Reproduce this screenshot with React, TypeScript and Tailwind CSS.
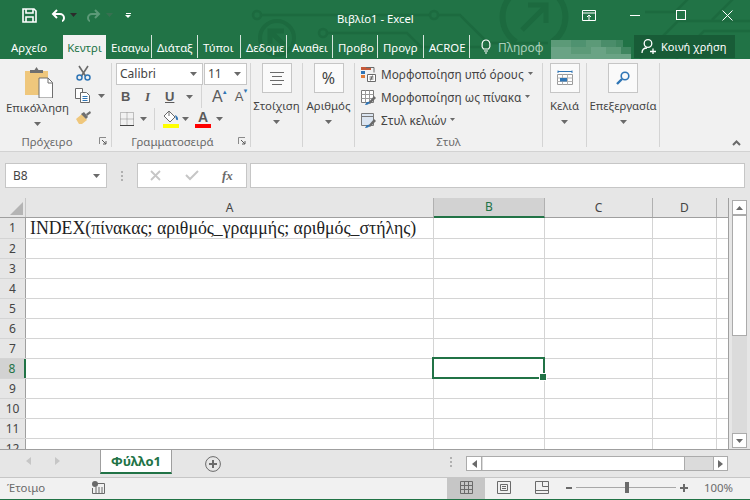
import React from 'react';

const UI_FONT = "font-['Noto_Sans','Liberation_Sans',sans-serif]";

const TABS = [
  { label: 'Εισαγω', w: 'w-[46px]' },
  { label: 'Διάταξ', w: 'w-[46px]' },
  { label: 'Τύποι', w: 'w-[43px]' },
  { label: 'Δεδομε', w: 'w-[46px]' },
  { label: 'Αναθει', w: 'w-[46px]' },
  { label: 'Προβο', w: 'w-[45px]' },
  { label: 'Προγρ', w: 'w-[46px]' },
  { label: 'ACROE', w: 'w-[46px]' },
];

const COLS = [
  { name: 'A', w: 'w-[408px]' },
  { name: 'B', w: 'w-[111px]' },
  { name: 'C', w: 'w-[108px]' },
  { name: 'D', w: 'w-[64px]' },
  { name: '', w: 'w-[12px]' },
];

const ROWS = [1, 2, 3, 4, 5, 6, 7, 8, 9, 10, 11, 12];

const Caret = ({ className = '' }: { className?: string }) => (
  <svg width="7" height="4" viewBox="0 0 7 4" className={className}>
    <path d="M0 0h7L3.5 4z" fill="#6a6a6a" />
  </svg>
);

const Launcher = () => (
  <svg width="8" height="8" viewBox="0 0 8 8">
    <path d="M.5 7V.5H7" fill="none" stroke="#8a8a8a" />
    <path d="M3 3l4 4M7 4v3H4" fill="none" stroke="#5a5a5a" />
  </svg>
);

const CircuitBg = () => (
  <svg width="750" height="59" viewBox="0 0 750 59" className="absolute left-0 top-0" fill="none" stroke="#1c6a3f" strokeWidth="2.5">
    <circle cx="257" cy="15" r="4" />
    <path d="M261 15h170M438 15h22l28 28h60" />
    <circle cx="434" cy="15" r="4" />
    <circle cx="323" cy="33" r="4" />
    <path d="M327 33h80l14 14h70" />
    <circle cx="277" cy="38" r="17" strokeWidth="4" />
    <path d="M270 44V31h14M271 32l13 13" strokeWidth="5" />
    <path d="M516-8a30 30 0 0 0 0 50M552-8a30 30 0 0 1 0 50" strokeWidth="6" />
    <path d="M522 30l24-24M528 5h18v18" strokeWidth="5" />
    <path d="M640 59l38-38h72M676 59l28-28h46M645 12h30l14-14M712 20l22-22" />
  </svg>
);

const SaveIcon = () => (
  <svg width="15" height="15" viewBox="0 0 15 15" fill="none" stroke="#fff" strokeWidth="1.6">
    <path d="M1 1h11l2 2v11H1z" />
    <path d="M4 1v4h7V1M4 14V9h7v5" />
  </svg>
);

const UndoIcon = ({ dim }: { dim?: boolean }) => (
  <svg width="15" height="13" viewBox="0 0 15 13" fill="none" stroke={dim ? '#5c9a78' : '#fff'} strokeWidth="2" className={dim ? '-scale-x-100' : ''}>
    <path d="M6 1L2 5l4 4M2 5h7a4 4 0 0 1 4 4c0 1.500-1 3-2 3" />
  </svg>
);

const PasteIcon = () => (
  <svg width="29" height="31" viewBox="0 0 29 31">
    <path d="M1 4h23v24H1z" fill="#efc77c" />
    <path d="M6 6V3h4.500l2-3 2 3H19v3z" fill="#6f6f6f" />
    <path d="M15 11h9l4.500 4.500V31H15z" fill="#fff" stroke="#6f6f6f" />
    <path d="M24 11v5h4.500" fill="none" stroke="#6f6f6f" />
  </svg>
);

const ScissorsIcon = () => (
  <svg width="15" height="16" viewBox="0 0 15 16" fill="none">
    <path d="M3 1l6.500 10M12 1L5.500 11" stroke="#6a6a6a" strokeWidth="1.600" />
    <circle cx="3.500" cy="12.500" r="2.500" stroke="#2f75b5" strokeWidth="1.500" />
    <circle cx="11.500" cy="12.500" r="2.500" stroke="#2f75b5" strokeWidth="1.500" />
  </svg>
);

const CopyIcon = () => (
  <svg width="15" height="15" viewBox="0 0 15 15" fill="#fff" stroke="#6a6a6a">
    <path d="M.5.500h7v10h-7z" />
    <path d="M5.500 4.500h6l3 3v7h-9z" />
    <path d="M7.500 8.500h5M7.500 10.500h5M7.500 12.500h5" stroke="#2f75b5" />
  </svg>
);

const BrushIcon = () => (
  <svg width="17" height="15" viewBox="0 0 17 15">
    <path d="M1 9l6-5 5 6-5 4H4z" fill="#efc77c" />
    <path d="M6 4l3-2 4 5-2 2z" fill="#6f6f6f" />
    <path d="M11 4l4-3 1 2-4 3z" fill="#6f6f6f" />
  </svg>
);

const BordersIcon = () => (
  <svg width="14" height="14" viewBox="0 0 14 14" fill="none" stroke="#8a8a8a" strokeDasharray="1 1">
    <path d="M.5.500h13v13h-13zM7 .500v13M.5 7h13" />
    <path d="M0 13.500h14" stroke="#444" strokeDasharray="none" />
  </svg>
);

const FillIcon = () => (
  <svg width="17" height="18" viewBox="0 0 17 18">
    <path d="M7 1l6 6-5 5-6-6z" fill="#fff" stroke="#6a6a6a" />
    <path d="M7 1v5" stroke="#6a6a6a" />
    <path d="M13 5c2 1 3 2 3 4s-2 1-2 0z" fill="#2f75b5" />
    <path d="M1 14h16v4H1z" fill="#ffff00" />
  </svg>
);

const AlignIcon = () => (
  <svg width="16" height="13" viewBox="0 0 16 13" stroke="#6a6a6a">
    <path d="M1 .500h14M3 4.500h10M1 8.500h14M3 12.500h10" />
  </svg>
);

const CondIcon = () => (
  <svg width="15" height="15" viewBox="0 0 15 15">
    <path d="M0 0h10v3H0z" fill="#c55a3b" />
    <path d="M0 4h4v3H0z" fill="#2f75b5" />
    <path d="M0 8h4v3H0z" fill="#e07b39" />
    <path d="M5 .500h8v5" fill="none" stroke="#6a6a6a" />
    <path d="M6.500 7.500h8v7h-8z" fill="#fff" stroke="#6a6a6a" />
    <path d="M8.500 10h4M8.500 12h4M11.500 8.500l-2 5" stroke="#444" strokeWidth=".8" />
  </svg>
);

const TableIcon = ({ plain }: { plain?: boolean }) => (
  <svg width="16" height="16" viewBox="0 0 16 16">
    <path d="M.5.500h12v12H.5z" fill={plain ? '#dbe5f1' : '#fff'} stroke="#7a7a7a" />
    {!plain && <path d="M4.500.500v12M8.500.500v12M.5 4.500h12M.5 8.500h12" stroke="#9a9a9a" />}
    {plain && <path d="M.5 3.500h12" stroke="#7a7a7a" />}
    <path d="M7 13l6-7 2 2-6 6z" fill="#6a6a6a" />
    <path d="M4 15c1-3 3-4 5-3-1 2-2 3-5 3z" fill="#2f75b5" />
  </svg>
);

const CellsIcon = () => (
  <svg width="16" height="17" viewBox="0 0 16 17" fill="none">
    <path d="M1 .500V3M15 .500V3M1 1.500h14" stroke="#2f75b5" />
    <path d="M.5 4.500h15v10h-15z" stroke="#9a9a9a" fill="#fff" />
    <path d="M5.500 4.500v10M10.500 4.500v10M.5 8h15M.5 11.500h15" stroke="#b4b4b4" />
    <path d="M3 8h7v3.500H3z" fill="#2f75b5" />
  </svg>
);

const SearchIcon = () => (
  <svg width="14" height="14" viewBox="0 0 14 14" fill="none">
    <circle cx="9" cy="5" r="3.800" stroke="#2f75b5" strokeWidth="1.600" />
    <path d="M6 8l-5 5" stroke="#2f75b5" strokeWidth="2.400" />
  </svg>
);

const RibbonGroup = ({ w, label, launcher, children }: { w: string; label: string; launcher?: boolean; children: React.ReactNode }) => (
  <div className={`${w} h-[84px] border-r border-[#d4d4d4] flex flex-col shrink-0`}>
    <div className="h-[73px]">{children}</div>
    <div className="flex-1 flex items-center text-[11.4px] text-[#6a6a6a] leading-none">
      <span className={`flex-1 text-center ${launcher ? 'pr-[5px]' : ''}`}>{label}</span>
      {launcher && <span className="mr-[4px] flex"><Launcher /></span>}
    </div>
  </div>
);

const BigButton = ({ w, icon, label }: { w: string; icon: React.ReactNode; label: string }) => (
  <RibbonGroup w={w} label="">
    <div className="flex flex-col items-center">
      <div className="w-[30px] h-[30px] bg-[#fafafa] border border-[#c6c6c6] flex items-center justify-center">{icon}</div>
      <span className="text-[11.4px] text-[#444] leading-none mt-[7px] whitespace-nowrap">{label}</span>
      <Caret className="mt-[9px]" />
    </div>
  </RibbonGroup>
);

const StyleRow = ({ icon, text }: { icon: React.ReactNode; text: string }) => (
  <div className="h-[23px] flex items-center pl-[6px] gap-[4px] text-[11.8px] text-[#444] whitespace-nowrap leading-none">
    <span className="w-[16px] flex">{icon}</span>
    <span>{text}</span>
    <Caret className="-mt-[2px] w-[5px] h-[3px]" />
  </div>
);

const Ribbon = () => (
  <div className="h-[93px] bg-[#f1f1f1] border-b border-[#d2d2d2] flex pt-[4px] shrink-0">
    <RibbonGroup w="w-[112px]" label="Πρόχειρο" launcher>
      <div className="flex">
        <div className="w-[75px] flex flex-col items-center">
          <div className="mt-[4px] ml-[2px] flex"><PasteIcon /></div>
          <span className="text-[11.4px] text-[#444] leading-none mt-[4px]">Επικόλληση</span>
          <Caret className="mt-[9px]" />
        </div>
        <div className="flex flex-col pt-[2px] gap-[7px]">
          <span className="flex ml-[1px]"><ScissorsIcon /></span>
          <span className="flex items-center gap-[8px]"><CopyIcon /><Caret /></span>
          <span className="flex"><BrushIcon /></span>
        </div>
      </div>
    </RibbonGroup>

    <RibbonGroup w="w-[139px]" label="Γραμματοσειρά" launcher>
      <div className="pl-[4px] text-[#444]">
        <div className="flex gap-[1px] h-[22px] text-[12px] leading-none">
          <div className="w-[87px] bg-white border border-[#c6c6c6] flex items-center justify-between px-[3px] pr-[5px]">Calibri<Caret /></div>
          <div className="w-[43px] bg-white border border-[#c6c6c6] flex items-center justify-between px-[3px] pr-[5px]">11<Caret /></div>
        </div>
        <div className="flex items-center h-[23px] font-['Liberation_Sans',sans-serif] text-[13px] leading-none text-[#5a5a5a]">
          <span className="w-[11px] ml-[5px] font-bold">B</span>
          <span className="w-[11px] ml-[13px] italic font-bold font-['Liberation_Serif',serif]">I</span>
          <span className="w-[9px] ml-[9px] font-bold underline">U</span>
          <Caret className="ml-[12px]" />
          <span className="w-px h-[23px] bg-[#d4d4d4] ml-[8px]" />
          <span className="ml-[10px] text-[16px] relative">A<span className="absolute -right-[5px] top-[0px] text-[6px] text-[#2f75b5]">▲</span></span>
          <span className="ml-[12px] relative">A<span className="absolute -right-[5px] -top-[2px] text-[6px] text-[#2f75b5]">▼</span></span>
        </div>
        <div className="flex items-center h-[22px]">
          <span className="ml-[4px] flex"><BordersIcon /></span>
          <Caret className="ml-[6px]" />
          <span className="w-px h-[22px] bg-[#d4d4d4] ml-[7px]" />
          <span className="ml-[7px] flex"><FillIcon /></span>
          <Caret className="ml-[3px]" />
          <span className="ml-[6px] flex flex-col items-center w-[16px] text-[14px] font-bold leading-none text-[#5a5a5a] font-['Liberation_Sans',sans-serif]">
            A<span className="w-[16px] h-[4px] bg-[#ff0000]" />
          </span>
          <Caret className="ml-[5px]" />
        </div>
      </div>
    </RibbonGroup>

    <BigButton w="w-[52px]" icon={<AlignIcon />} label="Στοίχιση" />
    <BigButton w="w-[52px]" icon={<span className="text-[16px] text-[#444] leading-none">%</span>} label="Αριθμός" />

    <RibbonGroup w="w-[188px]" label="Στυλ">
      <StyleRow icon={<CondIcon />} text="Μορφοποίηση υπό όρους" />
      <StyleRow icon={<TableIcon />} text="Μορφοποίηση ως πίνακα" />
      <StyleRow icon={<TableIcon plain />} text="Στυλ κελιών" />
    </RibbonGroup>

    <BigButton w="w-[44px]" icon={<CellsIcon />} label="Κελιά" />
    <BigButton w="w-[73px]" icon={<SearchIcon />} label="Επεξεργασία" />

    <div className="flex-1 flex justify-end items-end pb-[5px] pr-[9px]">
      <svg width="9" height="6" viewBox="0 0 9 6" fill="none" stroke="#6a6a6a" strokeWidth="2"><path d="M1 5l3.500-3.500L8 5" /></svg>
    </div>
  </div>
);

const Blur = () => (
  <div className="w-[80px] h-[24px] flex flex-col ml-[1px] shrink-0">
    <div className="flex h-[5px]" />
    <div className="flex h-[7px]">
      <span className="w-[20px] bg-[#5c9a78]" /><span className="w-[15px] bg-[#4f9270]" /><span className="w-[15px] bg-[#5c9a78]" /><span className="w-[15px] bg-[#4a8d6a]" /><span className="w-[7px] bg-[#3f8660]" />
    </div>
    <div className="flex h-[7px]">
      <span className="w-[20px] bg-[#6aa385]" /><span className="w-[20px] bg-[#5c9a78]" /><span className="w-[15px] bg-[#6aa385]" /><span className="w-[15px] bg-[#5c9a78]" /><span className="w-[10px] bg-[#3f8660]" />
    </div>
    <div className="flex h-[5px] bg-[#6aa385]" />
  </div>
);

const Header = () => (
  <div className="h-[59px] bg-[#217346] relative text-white shrink-0">
    <CircuitBg />
    <div className="relative h-[35px] flex items-center pb-[5px]">
      <span className="ml-[22px] flex"><SaveIcon /></span>
      <span className="ml-[14px] flex"><UndoIcon /></span>
      <Caret className="ml-[4px] invert brightness-200" />
      <span className="ml-[9px] flex"><UndoIcon dim /></span>
      <Caret className="ml-[5px] opacity-30" />
      <span className="ml-[12px] flex flex-col items-center gap-[1px]">
        <span className="w-[5px] h-[1px] bg-white" />
        <svg width="6" height="3" viewBox="0 0 6 3"><path d="M0 0h6L3 3z" fill="#fff" /></svg>
      </span>
      <span className="ml-[206px] mt-[8px] text-[11.3px] leading-none w-[245px] whitespace-nowrap">Βιβλίο1 - Excel</span>
      <svg width="14" height="11" viewBox="0 0 14 11" fill="none" stroke="#fff">
        <path d="M.5.500h13v10H.5zM.5 3h13M7 10V5M5 7l2-2 2 2" />
      </svg>
      <span className="ml-[34px] w-[10px] h-px bg-white" />
      <span className="ml-[36px] w-[10px] h-[10px] border border-white" />
      <svg width="11" height="11" viewBox="0 0 11 11" stroke="#fff" className="ml-[36px]"><path d="M.5.500l10 10M10.500.500l-10 10" /></svg>
    </div>
    <div className="relative h-[24px] flex text-[11.4px] leading-none">
      <div className="w-[63px] flex items-center pl-[11px] pt-[2px]">Αρχείο</div>
      <div className="w-[43px] bg-[#f1f1f1] text-[#217346] flex items-center justify-center pt-[2px]">Κεντρι</div>
      {TABS.map((t) => (
        <div key={t.label} className={`${t.w} h-[23px] border-r border-[#d5e5dc] flex items-center pl-[5px] pt-[2px] whitespace-nowrap`}>
          {t.label}
        </div>
      ))}
      <svg width="12" height="15" viewBox="0 0 12 15" fill="none" stroke="#fff" strokeWidth="1.200" className="ml-[10px] mt-[4px]">
        <path d="M3.500 10C1 7.500 1.500 1 6 1s5 6.500 2.500 9zM4 12h4M5 14h2" />
      </svg>
      <div className="w-[52px] ml-[6px] whitespace-nowrap text-[12px] text-[#a9cfba] flex items-center pt-[2px]">Πληροφ</div>
      <Blur />
      <div className="w-[101px] h-[23px] ml-[3px] bg-[#185c37] flex items-center pl-[7px] gap-[5px]">
        <svg width="15" height="15" viewBox="0 0 15 15" fill="none" stroke="#fff" strokeWidth="1.300">
          <circle cx="7" cy="4.500" r="3.800" />
          <path d="M1 14c0-3 2-5 5-5M9 12.500h6M12 9.500v5.500" />
        </svg>
        <span className="text-[11px]">Κοινή χρήση</span>
      </div>
    </div>
  </div>
);

const FormulaBar = () => (
  <div className="h-[46px] bg-[#e6e6e6] flex pt-[11px] shrink-0 text-[12px] leading-none text-[#444]">
    <div className="w-[102px] h-[25px] ml-[5px] bg-white border border-[#c6c6c6] flex items-center justify-between pl-[7px] pr-[6px]">
      B8<Caret />
    </div>
    <div className="w-[30px] flex flex-col items-center justify-center gap-[2px] h-[25px]">
      <span className="w-[2px] h-[2px] bg-[#b0b0b0]" />
      <span className="w-[2px] h-[2px] bg-[#b0b0b0]" />
      <span className="w-[2px] h-[2px] bg-[#b0b0b0]" />
    </div>
    <div className="w-[110px] h-[25px] bg-white border border-[#c6c6c6] flex items-center pl-[12px]">
      <svg width="11" height="11" viewBox="0 0 11 11" stroke="#c6c6c6" strokeWidth="1.800"><path d="M1 1l9 9M10 1l-9 9" /></svg>
      <svg width="14" height="11" viewBox="0 0 14 11" fill="none" stroke="#c6c6c6" strokeWidth="2" className="ml-[24px]"><path d="M1 5l4 4 8-8" /></svg>
      <span className="ml-[23px] font-['Liberation_Serif',serif] italic font-bold text-[13px] text-[#6a6a6a]">fx</span>
    </div>
    <div className="w-[495px] h-[25px] ml-[3px] bg-white border border-[#c6c6c6]" />
  </div>
);

const SheetGrid = () => (
  <div className="w-[729px] border-r border-[#9f9f9f] flex flex-col overflow-hidden">
    <div className="h-[20px] flex border-b border-[#9f9f9f] shrink-0 text-[12px] leading-none text-[#444]">
      <div className="w-[26px] border-r border-[#c6c6c6] flex items-end justify-end pr-[2px] pb-[2px] shrink-0">
        <svg width="13" height="13" viewBox="0 0 13 13"><path d="M13 0v13H0z" fill="#b4b4b4" /></svg>
      </div>
      {COLS.map((c) => (
        <div
          key={c.name}
          className={`${c.w} shrink-0 flex items-center justify-center border-r border-[#b0b0b0] ${c.name === 'B' ? 'bg-[#d2d2d2] text-[#217346] border-b-2 border-b-[#217346] -mb-px' : ''}`}
        >
          {c.name}
        </div>
      ))}
    </div>
    {ROWS.map((r) => (
      <div key={r} className={`${r === 1 ? 'h-[21px]' : 'h-[20px]'} flex shrink-0 border-b border-[#d4d4d4] bg-white`}>
        <div className={`w-[26px] shrink-0 flex items-center justify-center text-[12px] leading-none border-r border-[#9f9f9f] ${r === 8 ? 'bg-[#d2d2d2] text-[#217346] border-r-2 border-r-[#217346]' : 'bg-[#e6e6e6] text-[#444]'}`}>
          {r}
        </div>
        {COLS.map((c) => (
          <div key={c.name} className={`${c.w} shrink-0 border-r border-[#d4d4d4] relative`}>
            {r === 1 && c.name === 'A' && (
              <span className="absolute left-[4px] top-[0px] whitespace-nowrap font-['Liberation_Serif',serif] text-[17.8px] leading-[20px] text-[#222]">
                INDEX(πίνακας; αριθμός_γραμμής; αριθμός_στήλης)
              </span>
            )}
            {r === 8 && c.name === 'B' && (
              <span className="absolute -left-[2px] -top-[2px] -right-px -bottom-px border-2 border-[#217346] z-10">
                <span className="absolute -right-[4px] -bottom-[4px] w-[6px] h-[6px] bg-[#217346] border border-white box-content" />
              </span>
            )}
          </div>
        ))}
      </div>
    ))}
  </div>
);

const VScroll = () => (
  <div className="flex-1 flex flex-col pl-[3px] pr-[3px] pt-[2px] pb-px">
    <div className="h-[15px] bg-white border border-[#ababab] flex items-center justify-center">
      <Caret className="rotate-180" />
    </div>
    <div className="flex-1 bg-[#dbdbdb] flex flex-col">
      <div className="h-[121px] bg-white border border-[#ababab]" />
    </div>
    <div className="h-[15px] bg-white border border-[#ababab] flex items-center justify-center">
      <Caret />
    </div>
  </div>
);

const TabBar = () => (
  <div className="h-[28px] bg-[#e6e6e6] border-b border-[#c6c6c6] flex shrink-0 text-[#b0b0b0]">
    <div className="w-[100px] flex items-center pl-[26px] gap-[24px] pb-[5px]">
      <svg width="5" height="8" viewBox="0 0 5 8"><path d="M5 0v8L0 4z" fill="#c6c6c6" /></svg>
      <svg width="5" height="8" viewBox="0 0 5 8"><path d="M0 0v8l5-4z" fill="#c6c6c6" /></svg>
    </div>
    <div className="w-[72px] h-[24px] bg-white border-x border-[#9f9f9f] border-b-2 border-b-[#217346] flex items-center justify-center text-[13px] font-bold text-[#217346] leading-none">
      Φύλλο1
    </div>
    <div className="ml-[33px] mt-[6px]">
      <svg width="16" height="16" viewBox="0 0 16 16" fill="none" stroke="#6a6a6a">
        <circle cx="8" cy="8" r="7.400" />
        <path d="M8 4v8M4 8h8" strokeWidth="2" />
      </svg>
    </div>
    <div className="ml-[229px] mt-[7px] flex flex-col gap-[2px] h-[12px] w-[3px]">
      <span className="w-[2px] h-[2px] bg-[#b0b0b0]" />
      <span className="w-[2px] h-[2px] bg-[#b0b0b0]" />
      <span className="w-[2px] h-[2px] bg-[#b0b0b0]" />
    </div>
    <div className="w-[262px] h-[15px] ml-[13px] mt-[6px] flex bg-[#dbdbdb] border border-[#ababab]">
      <div className="w-[15px] bg-white border-r border-[#ababab] flex items-center justify-center">
        <svg width="5" height="8" viewBox="0 0 5 8"><path d="M5 0v8L0 4z" fill="#6a6a6a" /></svg>
      </div>
      <div className="w-[202px] bg-white border-r border-[#ababab] ml-px" />
      <div className="flex-1" />
      <div className="w-[14px] bg-white border-l border-[#ababab] flex items-center justify-center">
        <svg width="5" height="8" viewBox="0 0 5 8"><path d="M0 0v8l5-4z" fill="#6a6a6a" /></svg>
      </div>
    </div>
  </div>
);

const StatusBar = () => (
  <div className="h-[21px] bg-[#f1f1f1] flex items-center pb-[2px] shrink-0 text-[11.4px] leading-none text-[#6a6a6a]">
    <span className="ml-[7px] w-[85px]">Έτοιμο</span>
    <svg width="13" height="13" viewBox="0 0 13 13" className="shrink-0">
      <circle cx="3" cy="3" r="3" fill="#6a6a6a" />
      <path d="M5 2.500h7.500v10H.5V7" fill="none" stroke="#6a6a6a" />
      <path d="M3 7h8M3 9h8M3 11h8" stroke="#6a6a6a" strokeDasharray="2 1" />
    </svg>
    <div className="ml-[342px] w-[38px] h-[21px] -mb-[2px] pb-[2px] bg-[#c6c6c6] flex items-center justify-center">
      <svg width="13" height="13" viewBox="0 0 13 13" fill="none" stroke="#6a6a6a"><path d="M.5.500h12v12H.5zM4.500.500v12M8.500.500v12M.5 4.500h12M.5 8.500h12" /></svg>
    </div>
    <svg width="14" height="13" viewBox="0 0 14 13" fill="none" stroke="#6a6a6a" className="ml-[12px]"><path d="M.5.500h13v12H.5zM3.500 3.500h7v6h-7zM5 5.500h4M5 7.500h4" /></svg>
    <svg width="14" height="13" viewBox="0 0 14 13" fill="none" stroke="#6a6a6a" className="ml-[24px]"><path d="M.5.500h13v12H.5zM.5 9.500h13M7.500.500v5h6" /></svg>
    <span className="ml-[17px] w-[6px] h-[2px] bg-[#6a6a6a]" />
    <div className="ml-[4px] w-[100px] h-px bg-[#a8a8a8] flex items-center">
      <span className="ml-[49px] w-[4px] h-[11px] bg-[#6a6a6a]" />
    </div>
    <svg width="8" height="8" viewBox="0 0 8 8" className="ml-[4px]"><path d="M3 0h2v3h3v2H5v3H3V5H0V3h3z" fill="#6a6a6a" /></svg>
    <span className="ml-[16px]">100%</span>
  </div>
);

export default function App() {
  return (
    <div className={`w-[750px] h-[500px] overflow-hidden flex flex-col ${UI_FONT}`}>
      <Header />
      <Ribbon />
      <FormulaBar />
      <div className="h-[252px] flex bg-[#e6e6e6] border-b border-[#9f9f9f] shrink-0">
        <SheetGrid />
        <VScroll />
      </div>
      <TabBar />
      <StatusBar />
      <div className="h-px bg-[#217346] shrink-0" />
    </div>
  );
}
